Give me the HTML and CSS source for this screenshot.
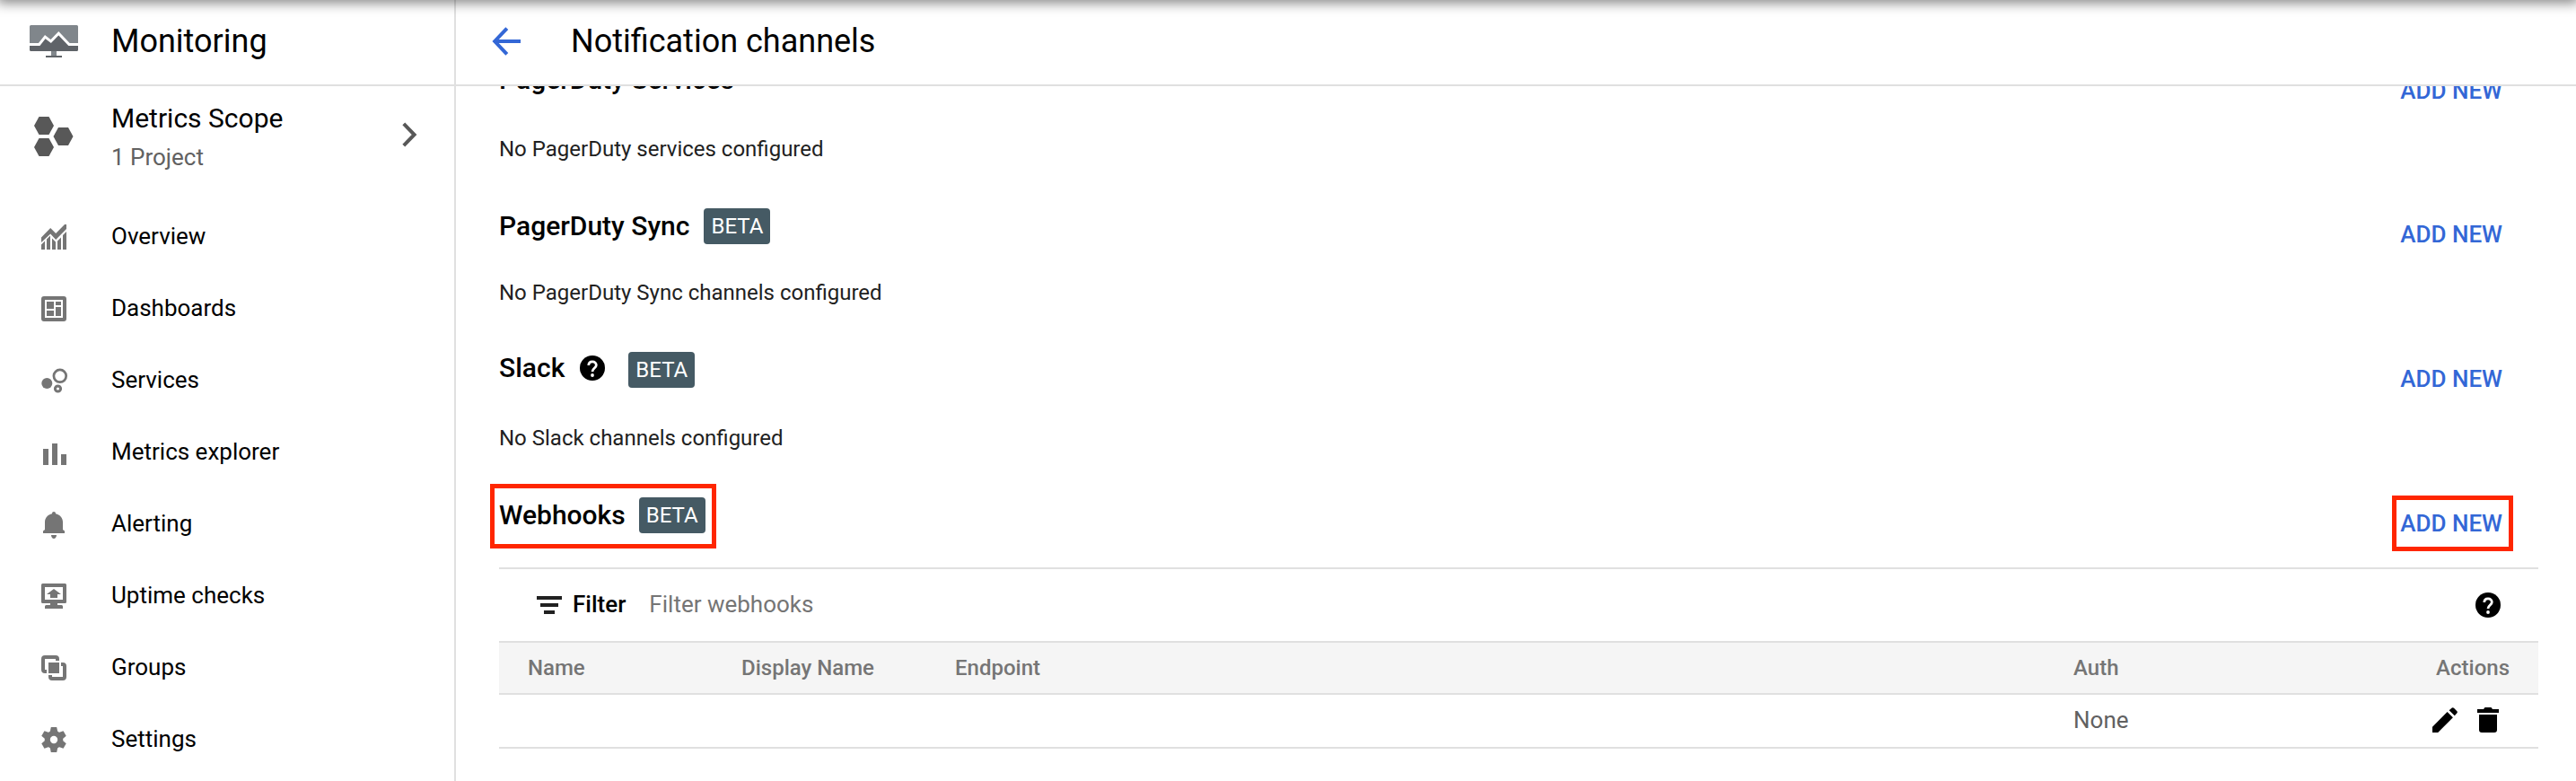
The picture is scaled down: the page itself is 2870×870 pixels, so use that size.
FILE: index.html
```html
<!DOCTYPE html>
<html lang="en">
<head>
<meta charset="utf-8">
<title>Notification channels – Monitoring</title>
<link rel="stylesheet" href="styles.css">
</head>
<body>
<svg class="defs" width="0" height="0" aria-hidden="true">
  <symbol id="help" viewBox="0 0 28 28">
    <circle cx="14" cy="14" r="14" fill="#000"/>
    <path d="M9.800 11.100C9.800 8.500 11.500 6.900 14 6.900s4.300 1.600 4.300 3.900c0 3.200-4.300 3.400-4.300 7.200" fill="none" stroke="#fff" stroke-width="2.800"/>
    <circle cx="14" cy="22" r="1.900" fill="#fff"/>
  </symbol>
</svg>
<div class="app">
  <aside class="sidebar">
    <div class="brand">
      <svg class="logo" width="54" height="36" viewBox="0 0 54 36">
        <path d="M24 28h6v6h6v2H18v-2h6z" fill="#80868b"/>
        <path d="M18 34h18v2H18z" fill="#5f6368"/>
        <path d="M1.500 0h51A1.500 1.500 0 0 1 54 1.500V22H0V1.500A1.500 1.500 0 0 1 1.500 0z" fill="#80868b"/>
        <path d="M0 22h11l6.300-8 6.400 4.500 8.600-9L44 22h10v5.500a1.500 1.500 0 0 1-1.500 1.500h-51A1.500 1.500 0 0 1 0 27.500z" fill="#5f6368"/>
        <path d="M0 21.500h10.700l6.600-8.400 6.400 5 8.600-9L44 21.500h10" fill="none" stroke="#fff" stroke-width="3"/>
      </svg>
      <span class="title">Monitoring</span>
    </div>
    <div class="scope">
      <svg class="scope-icon" width="44" height="44" viewBox="0 0 44 44" fill="#585858">
        <path id="hex" d="M0 10L5.500 0h11L22 10l-5.500 10h-11z"/>
        <use href="#hex" x="21.500" y="12"/>
        <use href="#hex" y="24"/>
      </svg>
      <div class="scope-text">
        <div class="scope-name">Metrics Scope</div>
        <div class="scope-count">1 Project</div>
      </div>
      <svg class="chevron" width="17" height="28" viewBox="0 0 17 28"><path d="M1.800 1.800L13.600 14 1.800 26.200" fill="none" stroke="#585858" stroke-width="4"/></svg>
    </div>
    <nav class="nav">
      <a class="nav-item"><svg class="nav-icon" viewBox="0 0 28 28"><path d="M0 14.500L10.200 4l6 6L26 0h2v5L16.200 17l-6-6.500L0 20z"/><path d="M0 22.500l4-4V28H0zM6 16.500l4-4V28H6zM12 15.500l4 4V28h-4zM18 18.500l4-4V28h-4zM24 12l4-4v20h-4z"/></svg><span>Overview</span></a>
      <a class="nav-item"><svg class="nav-icon" viewBox="0 0 28 28"><path fill-rule="evenodd" d="M3 0h22a3 3 0 0 1 3 3v22a3 3 0 0 1-3 3H3a3 3 0 0 1-3-3V3a3 3 0 0 1 3-3zM4 4v20h20V4z"/><path d="M6 6h8v8H6zM16 6h6v4h-6zM6 16h8v6H6zM16 12h6v10h-6z"/></svg><span>Dashboards</span></a>
      <a class="nav-item"><svg class="nav-icon" viewBox="0 0 28 28"><circle cx="6.300" cy="17" r="6"/><g fill="none" stroke="#757575"><circle cx="20.800" cy="8.800" r="6.900" stroke-width="2.700"/><circle cx="18.500" cy="23" r="3.100" stroke-width="3"/></g></svg><span>Services</span></a>
      <a class="nav-item"><svg class="nav-icon" viewBox="0 0 28 28"><path d="M2 10h6v18H2zM12 4h6v24h-6zM22 16h6v12h-6z"/></svg><span>Metrics explorer</span></a>
      <a class="nav-item"><svg class="nav-icon" viewBox="0 0 28 28"><path d="M2 24v-2.500l2-1.500v-8.500C4 6.500 7.500 3.200 12 2.200 12 .9 12.800 0 14 0s2 .9 2 2.200c4.500 1 8 4.300 8 9.300V20l2 1.500V24zM11 26h6c0 2-1.300 4-3 4s-3-2-3-4z"/></svg><span>Alerting</span></a>
      <a class="nav-item"><svg class="nav-icon" viewBox="0 0 28 28"><path fill-rule="evenodd" d="M1.500 0h25A1.500 1.500 0 0 1 28 1.500v19a1.500 1.500 0 0 1-1.500 1.500H18v2h4.500a1.500 1.500 0 0 1 1.500 1.500V28H4v-2.500A1.500 1.500 0 0 1 5.500 24H10v-2H1.500A1.500 1.500 0 0 1 0 20.500v-19A1.500 1.500 0 0 1 1.500 0zM4 4v14h20V4z"/><path d="M14 6l8 6h-4v4h-8v-4H6z"/></svg><span>Uptime checks</span></a>
      <a class="nav-item"><svg class="nav-icon" viewBox="0 0 28 28"><path id="corner" d="M4 0h12a4 4 0 0 1 4 4v2h-4V4H4v12h2v4H4a4 4 0 0 1-4-4V4a4 4 0 0 1 4-4z"/><use href="#corner" transform="rotate(180 14 14)"/><path d="M8 8h12v12H8z"/></svg><span>Groups</span></a>
      <a class="nav-item"><svg class="nav-icon" viewBox="0 0 28 28"><circle cx="14" cy="14" r="10.300"/><path id="teeth" d="M10.800 0h6.400L18.400 6v16l-1.200 6h-6.400L9.600 22V6z"/><use href="#teeth" transform="rotate(60 14 14)"/><use href="#teeth" transform="rotate(120 14 14)"/><circle cx="14" cy="14" r="4.200" fill="#fff"/></svg><span>Settings</span></a>
    </nav>
  </aside>
  <main class="main">
    <header class="page-head">
      <svg class="back" width="32" height="32" viewBox="0 0 32 32"><path d="M16.800 1.600L3.200 16l13.600 14.400M3 16h29" fill="none" stroke="#3367d6" stroke-width="4"/></svg>
      <h1 class="title">Notification channels</h1>
    </header>
    <div class="content">
      <section class="channel channel-services">
        <div class="channel-head"><h2>PagerDuty Services</h2><a class="add">ADD NEW</a></div>
        <p>No PagerDuty services configured</p>
      </section>
      <section class="channel channel-sync">
        <div class="channel-head"><h2>PagerDuty Sync</h2><span class="badge">BETA</span><a class="add">ADD NEW</a></div>
        <p>No PagerDuty Sync channels configured</p>
      </section>
      <section class="channel channel-slack">
        <div class="channel-head"><h2>Slack</h2><svg class="help"><use href="#help"/></svg><span class="badge">BETA</span><a class="add">ADD NEW</a></div>
        <p>No Slack channels configured</p>
      </section>
      <section class="channel channel-webhooks">
        <div class="channel-head"><div class="marked"><h2>Webhooks</h2><span class="badge">BETA</span></div><a class="add">ADD NEW</a></div>
      </section>
      <div class="table">
        <div class="filter">
          <svg width="28" height="20" viewBox="0 0 28 20" fill="#212121"><path d="M0 0h28v4H0zM4 8h20v4H4zM8 16h12v4H8z"/></svg>
          <b>Filter</b><span class="placeholder">Filter webhooks</span>
          <svg class="help"><use href="#help"/></svg>
        </div>
        <div class="row head"><span>Name</span><span>Display Name</span><span>Endpoint</span><span>Auth</span><span class="right">Actions</span></div>
        <div class="row">
          <span></span><span></span><span></span><span>None</span>
          <span class="actions">
            <svg width="28" height="28" viewBox="0 0 28 28"><path d="M0 28v-6.200L16.600 5l6.300 6.300L6.200 28zM18.600 3.200L21.800.6Q23 0 24 .8L27.400 4.200Q28.200 5.200 27.500 6.200L24.800 9.300z"/></svg>
            <svg width="24" height="28" viewBox="0 0 24 28"><path d="M7 2l1.500-2h7L17 2h7v4H0V2zM2 8h20v17a3 3 0 0 1-3 3H5a3 3 0 0 1-3-3z"/></svg>
          </span>
        </div>
      </div>
    </div>
  </main>
  <div class="top-shadow"></div>
</div>
</body>
</html>
```
FILE: styles.css
```css
* { box-sizing: border-box; }
body { margin: 0; background: #fff; color: #000; font-family: Roboto, "Liberation Sans", sans-serif; }
h1, h2, p { margin: 0; font-weight: 400; }
svg { display: block; flex: none; }
.defs { position: absolute; }
.app { position: relative; display: flex; width: 2870px; height: 870px; overflow: hidden; }
.top-shadow { position: absolute; left: 0; right: 0; top: -10px; height: 10px; box-shadow: 0 0 14px 3px rgba(0, 0, 0, .5); }

.sidebar { flex: none; width: 508px; border-right: 2px solid #e0e0e0; }
.brand { display: flex; align-items: center; height: 96px; padding: 0 0 2px 33px; border-bottom: 2px solid #e0e0e0; }
.title { font-size: 36px; line-height: 44px; }
.brand .title { margin-left: 37px; }
.scope { display: flex; height: 128px; padding: 16px 41px 0 38px; }
.scope-icon { margin-top: 18px; }
.scope-text { flex: 1; margin-left: 42px; }
.scope-name { font-size: 30px; line-height: 40px; }
.scope-count { font-size: 26px; line-height: 40px; margin-top: 3px; color: #616161; }
.chevron { margin-top: 24px; }
.nav-item { display: flex; align-items: center; height: 80px; padding-left: 46px; font-size: 26px; line-height: 32px; }
.nav-icon { width: 28px; height: 28px; fill: #757575; overflow: visible; }
.nav-item span { margin: -2px 0 0 50px; }

.main { flex: 1; display: flex; flex-direction: column; min-width: 0; }
.page-head { flex: none; display: flex; align-items: center; height: 96px; padding: 0 0 2px 40px; border-bottom: 2px solid #e0e0e0; }
.page-head .title { margin-left: 56px; }
.content { flex: 1; min-height: 0; overflow: hidden; padding: 0 42px 0 48px; }
.channel-head { display: flex; height: 40px; align-items: flex-start; }
.channel h2 { font-size: 30px; font-weight: 500; line-height: 40px; }
.channel p { font-size: 24px; line-height: 32px; color: #212121; }
.channel-services { height: 163px; margin-top: -27px; }
.channel-services p { margin-top: 41px; }
.channel-sync { height: 158px; }
.channel-sync p { margin-top: 38px; }
.channel-slack { height: 164px; }
.channel-slack p { margin-top: 42px; }
.channel-slack .help { margin: 6px 10px 0 17px; }
.channel-slack .badge { margin-top: 2px; }
.channel-webhooks { height: 78px; }
.badge { margin-left: 16px; height: 40px; padding: 0 8px; border-radius: 4px; background: #455a64; color: #fff; font-size: 24px; line-height: 40px; }
.channel-webhooks .badge { margin-left: 15px; }
.help { width: 28px; height: 28px; }
.add { position: relative; margin: 9px 40px 0 auto; color: #3367d6; font-size: 26px; font-weight: 500; line-height: 40px; }
.channel-services .add, .channel-slack .add { margin-top: 12px; }
.marked { position: relative; display: flex; }
.marked::after { content: ""; position: absolute; inset: -15px -12px -17px -10px; border: 5px solid #ff2600; }
.channel-webhooks .add::after { content: ""; position: absolute; inset: -11px -12px -11px -9px; border: 5px solid #ff2600; }

.table { border-top: 2px solid #e0e0e0; }
.filter { display: flex; align-items: center; height: 80px; padding: 0 42px 0 42px; font-size: 26px; line-height: 32px; }
.filter b { margin: -2px 0 0 12px; font-weight: 500; }
.placeholder { margin: -2px 0 0 26px; color: #757575; }
.filter .help { margin-left: auto; }
.row { display: grid; grid-template-columns: 238px 238px 1246px 1fr 200px; align-items: center; height: 60px; padding: 0 32px 2px; border-bottom: 2px solid #e0e0e0; font-size: 26px; line-height: 32px; color: #616161; }
.row.head { padding-bottom: 0; border-top: 2px solid #e0e0e0; background: #f5f5f5; color: #757575; font-size: 24px; font-weight: 500; }
.right { text-align: right; }
.actions { display: flex; justify-content: flex-end; gap: 22px; padding-right: 12px; fill: #000; }
```
